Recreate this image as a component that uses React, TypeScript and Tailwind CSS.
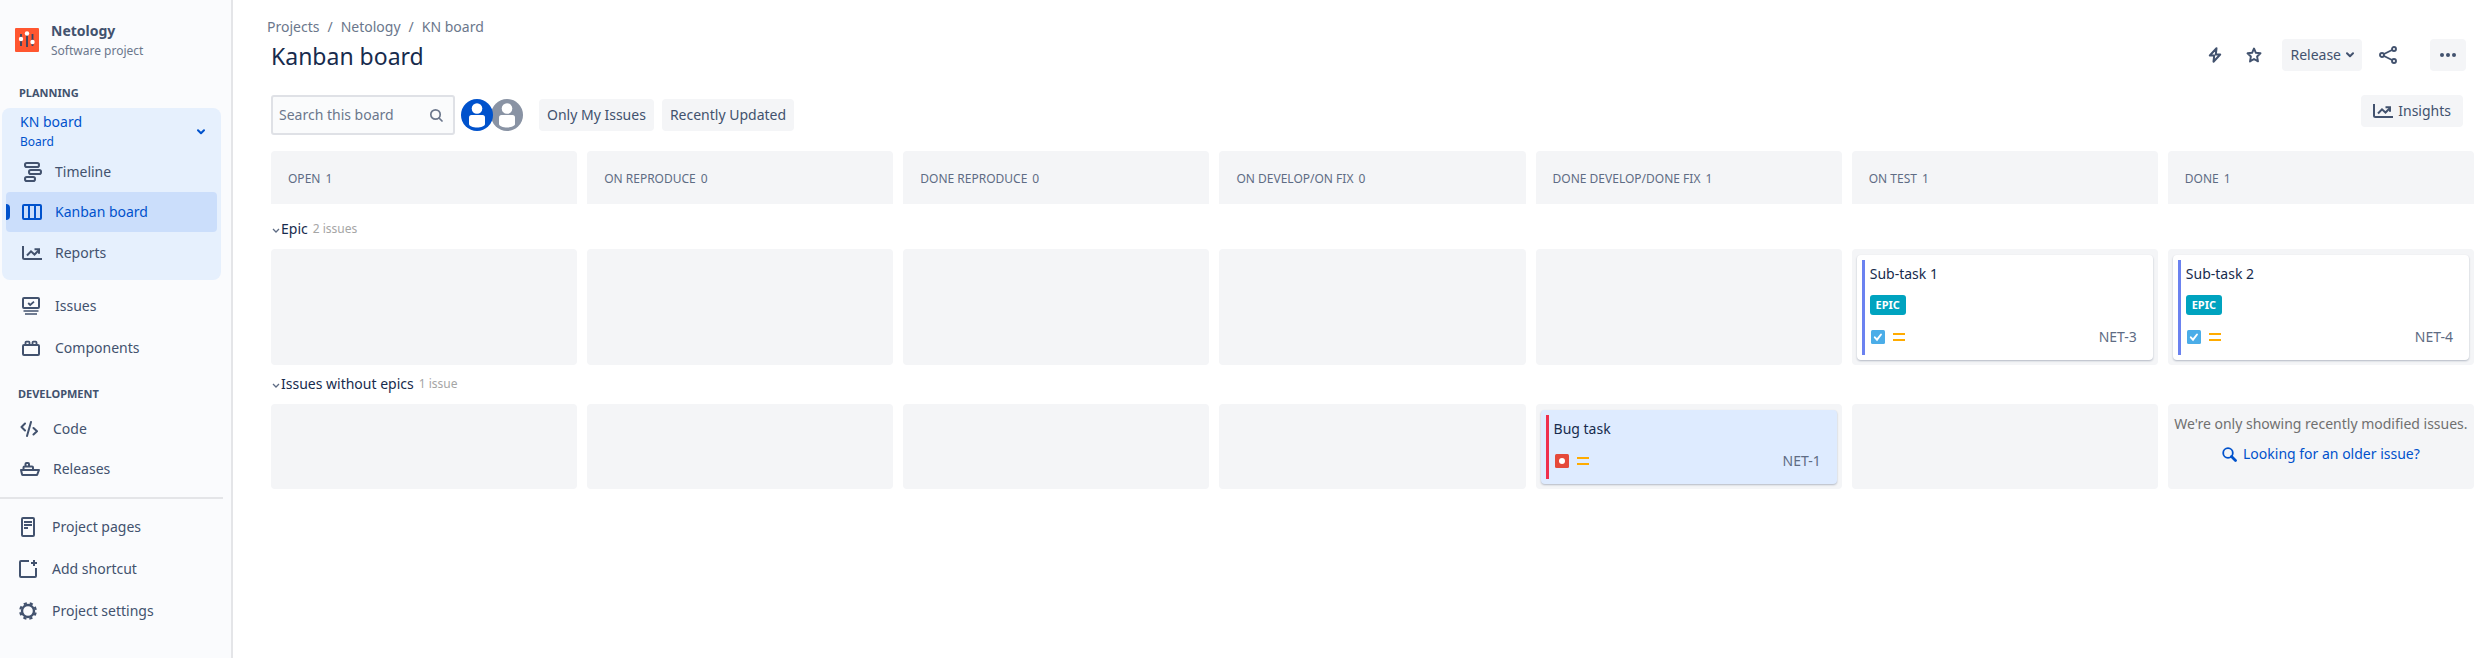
import React from 'react';

type IconProps = { className?: string };

const TimelineIcon = () => (
  <svg viewBox="0 0 20 22" className="h-[22px] w-5 shrink-0" fill="none" stroke="currentColor" strokeWidth="2">
    <rect x="3" y="2" width="14" height="4" rx="1.800" />
    <rect x="7" y="9" width="12" height="4" rx="1.800" />
    <rect x="3" y="16" width="10" height="4" rx="1.800" />
  </svg>
);

const BoardIcon = () => (
  <svg viewBox="0 0 20 16" className="h-4 w-5 shrink-0" fill="none" stroke="currentColor" strokeWidth="2">
    <rect x="1" y="1" width="18" height="14" rx="1" />
    <path d="M7 1v14M13 1v14" />
  </svg>
);

const ChartIcon = () => (
  <svg viewBox="0 0 20 14" className="h-3.5 w-5 shrink-0" fill="none" stroke="currentColor" strokeWidth="2">
    <path d="M1 0v11.5A1.5 1.5 0 0 0 2.500 13H20" />
    <path d="M5 9.500l4-4.200 3.500 3.200L17 4" />
    <path d="M12.500 3.200H17v4.500" />
  </svg>
);

const IssuesIcon = () => (
  <svg viewBox="0 0 18 18" className="h-[18px] w-[18px] shrink-0" fill="none" stroke="currentColor" strokeWidth="2">
    <rect x="1" y="1" width="16" height="10" rx="1" />
    <path d="M6.200 6l2 2L12 4.600" strokeWidth="1.800" />
    <path d="M1.500 14h15M3 17h12" strokeWidth="1.600" />
  </svg>
);

const ComponentsIcon = () => (
  <svg viewBox="0 0 18 16" className="h-4 w-[18px] shrink-0" fill="none" stroke="currentColor" strokeWidth="2">
    <rect x="1" y="5" width="16" height="10" rx="1" />
    <path d="M3.500 5V2.500a.8.800 0 0 1 .8-.8h2.400a.8.800 0 0 1 .8.800V5M10.500 5V2.500a.8.800 0 0 1 .8-.8h2.400a.8.800 0 0 1 .8.800V5" strokeWidth="1.800" />
  </svg>
);

const CodeIcon = () => (
  <svg viewBox="0 0 18 16" className="h-4 w-[18px] shrink-0" fill="none" stroke="currentColor" strokeWidth="2" strokeLinecap="round" strokeLinejoin="round">
    <path d="M5 2.500L1.500 6 5 9.500M13.500 7L17 10.300 13.500 13.500M11 1L7 15" />
  </svg>
);

const ShipIcon = () => (
  <svg viewBox="0 0 20 14" className="h-3.5 w-5 shrink-0" fill="none" stroke="currentColor" strokeWidth="2" strokeLinejoin="round">
    <path d="M1 8h18l-1.600 4.200a1 1 0 0 1-1 .8H3a1 1 0 0 1-1-.8z" />
    <path d="M3.500 8V5.500a1 1 0 0 1 1-1H12a1 1 0 0 1 1 1V8M5.500 4V2a1 1 0 0 1 1-1h1.500a1 1 0 0 1 1 1v2" />
  </svg>
);

const PageIcon = () => (
  <svg viewBox="0 0 18 20" className="h-5 w-[18px] shrink-0" fill="none" stroke="currentColor" strokeWidth="2">
    <rect x="3" y="1" width="12" height="18" rx="1" />
    <path d="M5 5h8M5 8h8M5 11h4" strokeWidth="1.800" />
  </svg>
);

const AddShortcutIcon = () => (
  <svg viewBox="0 0 18 18" className="h-[18px] w-[18px] shrink-0" fill="none" stroke="currentColor" strokeWidth="2">
    <path d="M10 1H2a1 1 0 0 0-1 1v14a1 1 0 0 0 1 1h14a1 1 0 0 0 1-1V8" />
    <path d="M15 0v6M12 3h6" />
  </svg>
);

const GearIcon = () => (
  <svg viewBox="0 0 18 18" className="h-[18px] w-[18px] shrink-0" fill="none" stroke="currentColor">
    <circle cx="9" cy="9" r="6" strokeWidth="2.400" />
    <circle cx="9" cy="9" r="7.800" strokeWidth="2.200" strokeDasharray="3.200 2.926" strokeDashoffset="-1.500" />
  </svg>
);

const ChevronIcon = ({ className = '' }: IconProps) => (
  <svg viewBox="0 0 8 6" className={className} fill="none" stroke="currentColor" strokeWidth="2" strokeLinecap="round" strokeLinejoin="round">
    <path d="M1 1.200l3 3 3-3" />
  </svg>
);

const ProjectLogo = () => (
  <svg viewBox="0 0 24 24" className="h-6 w-6 shrink-0">
    <rect width="24" height="24" rx="1" fill="#ff5630" />
    <path d="M6 6v12M12 6v13M17.500 6v12" stroke="#344563" strokeWidth="1.800" />
    <circle cx="6" cy="11" r="2.200" fill="#fff" />
    <circle cx="12" cy="5.500" r="2.200" fill="#fff" />
    <circle cx="17.500" cy="14" r="2.200" fill="#fff" />
  </svg>
);

const Avatar = ({ className = '', label }: { className?: string; label: string }) => (
  <button type="button" aria-label={label} className={className}>
    <svg viewBox="0 0 32 32" className="h-8 w-8">
      <circle cx="16" cy="16" r="16" fill="currentColor" />
      <circle cx="16" cy="9.500" r="5.300" fill="#fff" />
      <path d="M8 18.500a2.500 2.500 0 0 1 2.500-2.500h11a2.500 2.500 0 0 1 2.500 2.500V25c0 2-4 3.500-8 3.500S8 27 8 25z" fill="#fff" />
    </svg>
  </button>
);

const MediumPriority = () => (
  <svg viewBox="0 0 12 8" className="h-2 w-3" role="img" aria-label="Medium priority">
    <path d="M0 1h12M0 7h12" stroke="#ffab00" strokeWidth="2" />
  </svg>
);

const TaskType = () => (
  <svg viewBox="0 0 14 14" className="h-3.5 w-3.5" role="img" aria-label="Sub-task">
    <rect width="14" height="14" rx="1.500" fill="#4bade8" />
    <path d="M3.800 7.300l2.200 2.400L10 4.500" fill="none" stroke="#fff" strokeWidth="1.900" strokeLinecap="round" />
  </svg>
);

const BugType = () => (
  <svg viewBox="0 0 14 14" className="h-3.5 w-3.5" role="img" aria-label="Bug">
    <rect width="14" height="14" rx="1.500" fill="#e5493a" />
    <circle cx="7" cy="7" r="3" fill="#fff" />
  </svg>
);

type NavItemProps = { icon: React.ReactNode; label: string; className: string };

const NavItem = ({ icon, label, className }: NavItemProps) => (
  <a href="#" className={`flex items-center text-[14px] leading-5 ${className}`}>
    <span className="flex w-[33px] shrink-0 items-center">{icon}</span>
    {label}
  </a>
);

const Sidebar = () => (
  <aside className="w-[233px] shrink-0 border-r-2 border-[#e4e5e8] bg-[#fafbfd] text-[#42526e]">
    <div className="flex items-center gap-3 pl-[15px] pt-5">
      <ProjectLogo />
      <div>
        <div className="text-[14px] font-bold leading-[22px]">Netology</div>
        <div className="text-[12px] leading-[18px] text-[#6b778c]">Software project</div>
      </div>
    </div>
    <h2 className="mt-[25px] pl-[19px] text-[11px] font-bold leading-4">PLANNING</h2>
    <div className="ml-[2px] mr-[10px] mt-[7px] rounded-lg bg-[#e6f0fd] pb-[6px]">
      <button type="button" className="flex w-full items-center justify-between pl-[18px] pr-4 pt-1 text-left text-[#0052cc]">
        <span>
          <span className="block text-[14px] leading-5">KN board</span>
          <span className="block text-[12px] leading-5">Board</span>
        </span>
        <ChevronIcon className="h-[6px] w-2" />
      </button>
      <NavItem icon={<TimelineIcon />} label="Timeline" className="h-10 pl-5" />
      <div className="mx-1 flex h-10 items-center rounded bg-[#cbdefb] text-[#0052cc]">
        <span className="h-4 w-1 rounded-r-sm bg-[#0052cc]" />
        <NavItem icon={<BoardIcon />} label="Kanban board" className="flex-1 pl-3" />
      </div>
      <NavItem icon={<ChartIcon />} label="Reports" className="h-[42px] pl-5" />
    </div>
    <NavItem icon={<IssuesIcon />} label="Issues" className="mt-[5px] h-[42px] pl-[22px]" />
    <NavItem icon={<ComponentsIcon />} label="Components" className="h-[42px] pl-[22px]" />
    <h2 className="mt-[17px] pl-[18px] text-[11px] font-bold leading-4">DEVELOPMENT</h2>
    <NavItem icon={<CodeIcon />} label="Code" className="mt-[7px] h-10 pl-5" />
    <NavItem icon={<ShipIcon />} label="Releases" className="h-10 pl-5" />
    <hr className="mr-2 mt-2 border-t-2 border-[#e4e5e8]" />
    <NavItem icon={<PageIcon />} label="Project pages" className="mt-[7px] h-[42px] pl-[19px]" />
    <NavItem icon={<AddShortcutIcon />} label="Add shortcut" className="h-[42px] pl-[19px]" />
    <NavItem icon={<GearIcon />} label="Project settings" className="h-[42px] pl-[19px]" />
  </aside>
);

type Issue = { title: string; id: string; kind: 'subtask' | 'bug' };

const IssueCard = ({ issue }: { issue: Issue }) => {
  const bug = issue.kind === 'bug';
  return (
    <article
      className={`mx-[5px] mb-[5px] mt-[6px] flex gap-[5px] rounded-sm py-[5px] pl-[5px] pr-4 shadow-[0_1px_2px_rgba(9,30,66,0.28)] ${bug ? 'bg-[#deebff]' : 'bg-white'}`}
    >
      <span className={`w-[3px] shrink-0 ${bug ? 'bg-[#ef2f4d]' : 'bg-[#6b82f0]'}`} />
      <div className="min-w-0 flex-1 pt-1">
        <h3 className="text-[14px] leading-5 text-[#172b4d]">{issue.title}</h3>
        {!bug && (
          <a href="#" className="mt-[11px] flex h-5 w-9 items-center justify-center rounded-[3px] bg-[#00a3bf] text-[11px] font-bold leading-4 text-white">
            EPIC
          </a>
        )}
        <div className="mb-1 mt-2 flex h-7 items-center justify-between text-[#5e6c84]">
          <span className="flex items-center gap-2 pl-px">
            {bug ? <BugType /> : <TaskType />}
            <MediumPriority />
          </span>
          <a href="#" className="text-[14px] leading-5">{issue.id}</a>
        </div>
      </div>
    </article>
  );
};

const columns = [
  { name: 'OPEN', count: 1 },
  { name: 'ON REPRODUCE', count: 0 },
  { name: 'DONE REPRODUCE', count: 0 },
  { name: 'ON DEVELOP/ON FIX', count: 0 },
  { name: 'DONE DEVELOP/DONE FIX', count: 1 },
  { name: 'ON TEST', count: 1 },
  { name: 'DONE', count: 1 },
];

const epicIssues: Record<string, Issue> = {
  'ON TEST': { title: 'Sub-task 1', id: 'NET-3', kind: 'subtask' },
  DONE: { title: 'Sub-task 2', id: 'NET-4', kind: 'subtask' },
};

const otherIssues: Record<string, Issue> = {
  'DONE DEVELOP/DONE FIX': { title: 'Bug task', id: 'NET-1', kind: 'bug' },
};

const OlderIssues = () => (
  <div className="flex flex-col items-center gap-[10px] pt-[10px] text-[14px] leading-5">
    <p className="whitespace-nowrap text-[#707070]">We're only showing recently modified issues.</p>
    <a href="#" className="flex items-center gap-[6px] whitespace-nowrap text-[#0052cc]">
      <svg viewBox="0 0 15 15" className="h-[15px] w-[15px]" fill="none" stroke="currentColor">
        <circle cx="6" cy="6" r="4.800" strokeWidth="1.800" />
        <path d="M9.500 9.500l4 4" strokeWidth="2.800" strokeLinecap="round" />
      </svg>
      Looking for an older issue?
    </a>
  </div>
);

type SwimlaneProps = { title: string; summary: string; issues: Record<string, Issue>; footer?: React.ReactNode; headClass: string };

const Swimlane = ({ title, summary, issues, footer, headClass }: SwimlaneProps) => (
  <section>
    <div className={`flex items-center ${headClass}`}>
      <button type="button" className="flex items-center gap-px pl-px text-[14px] leading-5 text-[#172b4d]">
        <svg viewBox="0 0 8 6" className="mt-1 h-[6px] w-2" fill="none" stroke="#5e6c84" strokeWidth="1.300">
          <path d="M1 1l3 3 3-3" />
        </svg>
        {title}
      </button>
      <span className="pl-[5px] text-[12px] leading-5 text-[#a5a5a5]">{summary}</span>
    </div>
    <div className="grid grid-cols-7 gap-[10px]">
      {columns.map((column) => (
        <div key={column.name} className="min-w-0 rounded bg-[#f4f5f7]">
          {issues[column.name] && <IssueCard issue={issues[column.name]} />}
          {column.name === 'DONE' && footer}
        </div>
      ))}
    </div>
  </section>
);

const buttonClass = 'flex h-8 items-center rounded bg-[#f4f5f7] text-[14px] leading-5 text-[#42526e]';

export default function App() {
  return (
    <div className="flex min-h-screen bg-white font-['Noto_Sans','Open_Sans',sans-serif]">
      <Sidebar />
      <main className="min-w-0 flex-1 pb-10 pl-[38px] pr-[17px] pt-[17px]">
        <div className="flex items-start justify-between">
          <div>
            <nav aria-label="Breadcrumb" className="-ml-1 flex gap-2 text-[14px] leading-5 text-[#6b778c]">
              <a href="#">Projects</a>
              <span>/</span>
              <a href="#">Netology</a>
              <span>/</span>
              <a href="#">KN board</a>
            </nav>
            <h1 className="mt-[3px] text-[23px] leading-8 text-[#172b4d]">Kanban board</h1>
          </div>
          <div className="mr-2 mt-[22px] flex items-center text-[#42526e]">
            <button type="button" aria-label="Automation" className="mr-6">
              <svg viewBox="0 0 14 16" className="h-4 w-3.5" fill="none" stroke="currentColor" strokeWidth="2" strokeLinejoin="round">
                <path d="M8.500 1.300L1.800 8.500h4.400L5.500 14.700 12.200 7.500H7.800z" />
              </svg>
            </button>
            <button type="button" aria-label="Add to starred" className="mr-5">
              <svg viewBox="0 0 16 16" className="h-4 w-4" fill="none" stroke="currentColor" strokeWidth="1.900" strokeLinejoin="round">
                <path d="M8 1.500l1.900 4.300 4.600.5-3.400 3.200.9 4.900L8 12l-4 2.400.9-4.900L1.500 6.300l4.600-.5z" />
              </svg>
            </button>
            <button type="button" className={`${buttonClass} gap-[5px] px-2`}>
              Release
              <ChevronIcon className="h-[6px] w-2" />
            </button>
            <button type="button" aria-label="Share" className="ml-[17px] mr-[33px]">
              <svg viewBox="0 0 18 18" className="h-[18px] w-[18px]" fill="none" stroke="currentColor" strokeWidth="1.900">
                <circle cx="3" cy="9" r="2" />
                <circle cx="15" cy="3" r="2" />
                <circle cx="15" cy="15" r="2" />
                <path d="M5 8l8-4M5 10l8 4" />
              </svg>
            </button>
            <button type="button" aria-label="More actions" className={`${buttonClass} w-9 justify-center`}>
              <svg viewBox="0 0 16 4" className="h-1 w-4" fill="currentColor">
                <circle cx="2" cy="2" r="2" />
                <circle cx="8" cy="2" r="2" />
                <circle cx="14" cy="2" r="2" />
              </svg>
            </button>
          </div>
        </div>

        <div className="mt-[23px] flex items-start justify-between">
          <div className="flex items-center">
            <label className="flex h-10 w-[184px] items-center rounded-[3px] border-2 border-[#dfe1e6] bg-[#fafbfc] pl-[6px] pr-[10px]">
              <input
                type="search"
                aria-label="Search this board"
                placeholder="Search this board"
                className="min-w-0 flex-1 bg-transparent text-[14px] leading-5 text-[#172b4d] outline-none placeholder:text-[#6b778c]"
              />
              <svg viewBox="0 0 14 14" className="h-3.5 w-3.5 shrink-0 text-[#6b778c]" fill="none" stroke="currentColor" strokeWidth="1.700" strokeLinecap="round">
                <circle cx="6.500" cy="6.500" r="4.700" />
                <path d="M10 10l3 3" />
              </svg>
            </label>
            <div className="ml-[6px] flex">
              <Avatar label="Assignee" className="relative z-10 h-8 w-8 text-[#0052cc]" />
              <Avatar label="Unassigned" className="-ml-[2px] h-8 w-8 text-[#8993a4]" />
            </div>
            <button type="button" className={`${buttonClass} ml-4 px-2`}>Only My Issues</button>
            <button type="button" className={`${buttonClass} ml-2 px-2`}>Recently Updated</button>
          </div>
          <button type="button" className={`${buttonClass} mr-[11px] gap-[5px] px-3`}>
            <ChartIcon />
            Insights
          </button>
        </div>

        <div className="mt-4 grid grid-cols-7 gap-[10px]">
          {columns.map((column) => (
            <div key={column.name} className="flex h-[53px] items-center gap-[5px] rounded-t bg-[#f4f5f7] px-[17px] pt-[2px] text-[12px] leading-4 text-[#5e6c84]">
              <h2>{column.name}</h2>
              <span>{column.count}</span>
            </div>
          ))}
        </div>

        <Swimlane title="Epic" summary="2 issues" issues={epicIssues} headClass="h-[45px] pt-[5px]" />
        <Swimlane title="Issues without epics" summary="1 issue" issues={otherIssues} footer={<OlderIssues />} headClass="h-[39px] pb-[2px]" />
      </main>
    </div>
  );
}
